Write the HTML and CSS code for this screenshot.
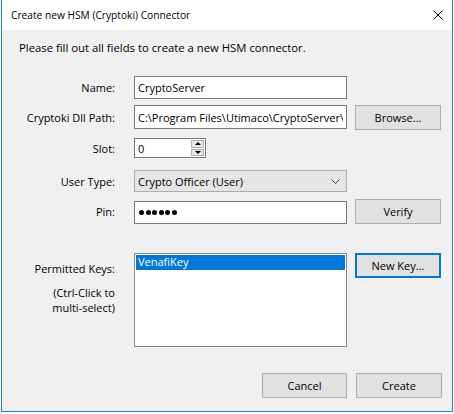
FILE: index.html
```html
<!DOCTYPE html>
<html lang="en">

<head>
    <meta charset="UTF-8">
    <title>Create new HSM (Cryptoki) Connector</title>
    <link rel="stylesheet" href="styles.css">
</head>

<body>
    <div class="window">
        <div class="titlebar">
            <span class="title">Create new HSM (Cryptoki) Connector</span>
            <svg class="close" width="10" height="10" viewBox="0 0 10 10">
                <path d="M0.5 0.5 L9.5 9.5 M9.5 0.5 L0.5 9.5" stroke="#000" stroke-width="1" fill="none" />
            </svg>
        </div>

        <div class="content">
            <p class="intro">Please fill out all fields to create a new HSM connector.</p>

            <div class="row row-name">
                <label for="name">Name:</label>
                <input class="field" type="text" id="name" value="CryptoServer">
            </div>

            <div class="row row-path">
                <label for="path">Cryptoki Dll Path:</label>
                <input class="field" type="text" id="path" value="C:\Program Files\Utimaco\CryptoServer\Lib\cs_pkcs11_R2.dll">
                <button class="btn">Browse...</button>
            </div>

            <div class="row row-slot">
                <label for="slot">Slot:</label>
                <div class="spinner">
                    <input type="text" id="slot" value="0">
                    <div class="spin-btns">
                        <span class="spin-up"></span>
                        <span class="spin-down"></span>
                    </div>
                </div>
            </div>

            <div class="row row-type">
                <label>User Type:</label>
                <div class="combo">
                    <span>Crypto Officer (User)</span>
                    <svg width="9" height="5" viewBox="0 0 9 5">
                        <path d="M0.5 0.5 L4.5 4.5 L8.5 0.5" stroke="#444" stroke-width="1" fill="none" />
                    </svg>
                </div>
            </div>

            <div class="row row-pin">
                <label for="pin">Pin:</label>
                <div class="field pin" id="pin">
                    <i></i><i></i><i></i><i></i><i></i><i></i>
                </div>
                <button class="btn">Verify</button>
            </div>

            <div class="row row-keys">
                <div class="keys-label">
                    <span>Permitted Keys:</span>
                    <span class="hint">(Ctrl-Click to<br>multi-select)</span>
                </div>
                <div class="listbox">
                    <div class="item selected">VenafiKey</div>
                </div>
                <button class="btn default">New Key...</button>
            </div>

            <div class="actions">
                <button class="btn cancel">Cancel</button>
                <button class="btn">Create</button>
            </div>
        </div>
    </div>
</body>

</html>
```

FILE: styles.css
```css
body {
    margin: 0;
    background-color: #fff;
    font-family: "Segoe UI", "Open Sans", sans-serif;
    font-size: 11px;
    color: #000;
}

.window {
    box-sizing: border-box;
    width: 452px;
    height: 412px;
    margin-left: 1px;
    border: 1px solid #1a82d4;
    border-top: none;
    background-color: #f0f0f0;
    display: flex;
    flex-direction: column;
}

.titlebar {
    height: 30px;
    background-color: #fff;
    display: flex;
    align-items: center;
    justify-content: space-between;
    padding: 0 9px 0 9px;
}

.title {
    font-size: 10.2px;
}

.content {
    padding: 10px 0 0 0;
}

.intro {
    margin: 0 0 20px 17px;
    line-height: 16px;
    font-size: 11.3px;
}

.row {
    display: grid;
    grid-template-columns: 124px 213px 86px;
    column-gap: 8px;
    align-items: center;
}

.row label {
    text-align: right;
    padding-right: 11px;
}

.row-name {
    height: 23px;
}

.row-path {
    height: 24px;
    margin-top: 6px;
}

.row-slot {
    height: 20px;
    margin-top: 9px;
}

.row-type {
    height: 22px;
    margin-top: 12px;
}

.row-pin {
    height: 25px;
    margin-top: 7px;
}

.row-keys {
    margin-top: 29px;
    align-items: start;
}

.field,
.spinner input {
    box-sizing: border-box;
    height: 23px;
    margin: 0;
    padding: 0 3px;
    border: 1px solid #7a7a7a;
    background-color: #fff;
    font-family: inherit;
    font-size: 11px;
    color: #000;
    outline: none;
}

.row-path .field {
    height: 24px;
    align-self: start;
}

.btn {
    box-sizing: border-box;
    height: 25px;
    margin: 0;
    padding: 0;
    border: 1px solid #adadad;
    background-color: #e1e1e1;
    font-family: inherit;
    font-size: 11px;
    color: #000;
}

.row-path .btn {
    align-self: start;
}

.spinner {
    position: relative;
    width: 72px;
}

.spinner input {
    width: 72px;
    height: 20px;
}

.spin-btns {
    position: absolute;
    top: 2px;
    right: 2px;
    width: 13px;
    height: 16px;
    display: flex;
    flex-direction: column;
    gap: 1px;
}

.spin-btns span {
    flex: 1;
    background-color: #e8e8e8;
    border: 1px solid #b0b0b0;
    display: flex;
    align-items: center;
    justify-content: center;
}

.spin-up::after {
    content: "";
    border-left: 3px solid transparent;
    border-right: 3px solid transparent;
    border-bottom: 3px solid #000;
}

.spin-down::after {
    content: "";
    border-left: 3px solid transparent;
    border-right: 3px solid transparent;
    border-top: 3px solid #000;
}

.combo {
    box-sizing: border-box;
    height: 22px;
    border: 1px solid #adadad;
    background-color: #e5e5e5;
    display: flex;
    align-items: center;
    justify-content: space-between;
    padding: 0 6px 0 3px;
}

.pin {
    display: flex;
    align-items: center;
    gap: 1.5px;
    padding-left: 4px;
    align-self: end;
}

.pin i {
    width: 5px;
    height: 5px;
    border-radius: 50%;
    background-color: #000;
}

.keys-label {
    display: flex;
    flex-direction: column;
    align-items: flex-end;
    text-align: right;
    padding-right: 11px;
    padding-top: 8px;
    line-height: 15px;
}

.hint {
    margin-top: 9px;
}

.listbox {
    box-sizing: border-box;
    height: 94px;
    border: 1px solid #828790;
    background-color: #fff;
    padding: 1px;
}

.item {
    height: 15px;
    line-height: 14px;
    padding-left: 2px;
}

.item.selected {
    background-color: #0078d7;
    color: #fff;
}

.btn.default {
    border: 2px solid #0078d7;
}

.actions {
    display: flex;
    justify-content: flex-end;
    gap: 9px;
    margin-top: 26px;
    padding-right: 10px;
}

.actions .btn {
    width: 86px;
}

.actions .cancel {
    width: 85px;
}
```
